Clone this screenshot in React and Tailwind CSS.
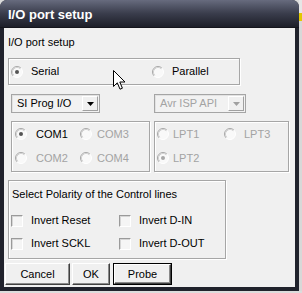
import React from 'react';

function Radio({ checked, disabled }) {
  return (
    <svg width="12" height="12" viewBox="0 0 12 12" className="shrink-0">
      <circle cx="6" cy="6" r="5.5" fill="#f9f9f9" />
      <path d="M2.11 9.89 A5.5 5.5 0 0 1 9.89 2.11" stroke="#a6a6a6" fill="none" />
      <path d="M9.89 2.11 A5.5 5.5 0 0 1 2.11 9.89" stroke="#ffffff" fill="none" />
      <path d="M2.82 9.18 A4.5 4.5 0 0 1 9.18 2.82" stroke="#d2d2d2" fill="none" />
      {checked && <circle cx="6" cy="6" r="2" fill={disabled ? '#a8a8a8' : '#555555'} />}
    </svg>
  );
}

function RadioItem({ label, checked, disabled, gap = 'gap-[8px]' }) {
  return (
    <div className={`flex items-center ${gap}`}>
      <Radio checked={checked} disabled={disabled} />
      <span className={disabled ? 'text-[#a3a3a3]' : 'text-black'}>{label}</span>
    </div>
  );
}

function CheckItem({ label }) {
  return (
    <div className="flex items-center gap-[8px]">
      <span className="w-[12px] h-[12px] shrink-0 border border-t-[#9a9a9a] border-l-[#9a9a9a] border-b-white border-r-white bg-[#f5f5f5] shadow-[inset_1px_1px_0_#d6d6d6]" />
      <span>{label}</span>
    </div>
  );
}

function Dropdown({ label, disabled, className }) {
  return (
    <div className={`flex items-stretch h-[19px] border border-[#a5a5a5] bg-[#f2f2f2] shadow-[inset_1px_1px_0_#e2e2e2] ${className}`}>
      <span className={`flex-1 flex items-center pl-[5px] ${disabled ? 'text-[#a3a3a3]' : 'text-black'}`}>
        {label}
      </span>
      <span className="w-[16px] m-[1px] flex items-center justify-center bg-[#f0f0f0] border border-t-white border-l-white border-r-[#a0a0a0] border-b-[#a0a0a0]">
        <svg width="7" height="4" viewBox="0 0 7 4">
          <path d="M0 0 H7 L3.5 4 Z" fill={disabled ? '#a0a0a0' : '#000000'} />
        </svg>
      </span>
    </div>
  );
}

const etched = 'border border-[#a6a6a6] shadow-[inset_1px_1px_0_#ffffff,1px_1px_0_#ffffff]';
const raised =
  'flex items-center justify-center bg-[#f0f0f0] border border-t-white border-l-white border-r-[#404040] border-b-[#404040] shadow-[inset_-1px_-1px_0_#8a8a8a]';

export default function App() {
  return (
    <div className="w-[302px] h-[293px] flex flex-col bg-[#dadada] font-['Liberation_Sans',Arial,sans-serif] text-[11px] text-black overflow-hidden">
      <div className="flex">
        {/* Window */}
        <div className="w-[299px] h-[291px] rounded-t-[7px] bg-[#20222c] flex flex-col">
          <div className="h-[28px] rounded-t-[7px] bg-linear-to-b from-[#676b7e] via-[#3a3d4c] to-[#1d1f29] flex items-center pl-[8px] pt-[1px] border-b border-[#14151c]">
            <span className="text-white font-bold text-[13px] leading-none">I/O port setup</span>
          </div>

          {/* Client area */}
          <div className="relative mx-[4px] w-[291px] h-[259px] bg-[#f0f0f0] flex flex-col">
            <div className="ml-[4px] mt-[8px] h-[13px] leading-[13px]">I/O port setup</div>

            <div className={`ml-[4px] mt-[9px] w-[232px] h-[27px] flex items-center pl-[2px] ${etched}`}>
              <div className="w-[141px]">
                <RadioItem label="Serial" checked />
              </div>
              <RadioItem label="Parallel" />
            </div>

            <div className="mt-[9px] flex">
              <Dropdown label="SI Prog I/O" className="ml-[7px] w-[89px]" />
              <Dropdown label="Avr ISP API" disabled className="ml-[54px] w-[92px]" />
            </div>

            <div className="mt-[8px] flex h-[51px]">
              <div className={`ml-[7px] w-[139px] grid grid-cols-[65px_1fr] grid-rows-[24px_24px] pl-[3px] ${etched}`}>
                <RadioItem label="COM1" checked gap="gap-[9px]" />
                <RadioItem label="COM3" disabled gap="gap-[5px]" />
                <RadioItem label="COM2" disabled gap="gap-[9px]" />
                <RadioItem label="COM4" disabled gap="gap-[5px]" />
              </div>
              <div className={`ml-[4px] w-[135px] grid grid-cols-[67px_1fr] grid-rows-[24px_24px] pl-[2px] ${etched}`}>
                <RadioItem label="LPT1" disabled gap="gap-[4px]" />
                <RadioItem label="LPT3" disabled gap="gap-[8px]" />
                <RadioItem label="LPT2" checked disabled gap="gap-[4px]" />
                <div />
              </div>
            </div>

            <div className={`ml-[4px] mt-[8px] w-[218px] h-[79px] flex flex-col pt-[7px] ${etched}`}>
              <div className="ml-[3px] h-[13px] leading-[13px]">Select Polarity of the Control lines</div>
              <div className="mt-[8px] grid grid-cols-[108px_1fr] grid-rows-[23px_23px] pl-[2px]">
                <CheckItem label="Invert Reset" />
                <CheckItem label="Invert D-IN" />
                <CheckItem label="Invert SCKL" />
                <CheckItem label="Invert D-OUT" />
              </div>
            </div>

            <div className="mt-[4px] ml-[1px] flex h-[22px] gap-[2px]">
              <button className={`w-[65px] ${raised}`}>Cancel</button>
              <button className={`w-[38px] ${raised}`}>OK</button>
              <div className="ml-[1px] w-[59px] border border-black flex">
                <button className={`flex-1 ${raised}`}>Probe</button>
              </div>
            </div>

            {/* mouse pointer */}
            <svg width="13" height="21" viewBox="0 0 13 21" className="absolute left-[109px] top-[42px]">
              <path
                d="M0.5 0.5 L0.5 16.5 L4.3 12.8 L7 19.2 L9.4 18.2 L6.8 12 L12 12 Z"
                fill="#ffffff"
                stroke="#000000"
                strokeLinejoin="miter"
              />
            </svg>
          </div>
        </div>

        <div className="w-[3px] flex flex-col">
          <div className="h-[13px] bg-[#e6e6e6]" />
          <div className="h-[8px] bg-[#e2c800]" />
          <div className="flex-1 bg-[#d8d8d8]" />
        </div>
      </div>
      <div className="h-[2px] bg-[#dcdcdc]" />
    </div>
  );
}
